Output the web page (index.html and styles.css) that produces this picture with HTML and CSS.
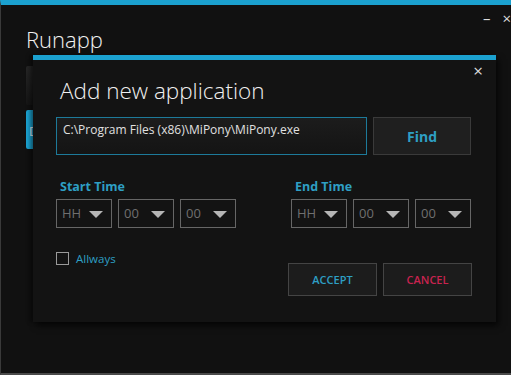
FILE: index.html
```
<!DOCTYPE html>
<html lang="en">
<head>
    <meta charset="UTF-8">
    <title>Runapp</title>
    <link rel="stylesheet" href="styles.css">
</head>
<body>
    <div class="window">
        <div class="titlebar">
            <h1 class="app-title">Runapp</h1>
            <div class="win-controls">
                <span class="win-btn">&ndash;</span>
                <span class="win-btn">&times;</span>
            </div>
        </div>

        <div class="main">
            <div class="app-list">
                <div class="app-item"></div>
                <div class="app-item app-item-active">D</div>
            </div>

            <!-- модальное окно поверх списка -->
            <div class="dialog">
                <button class="dialog-close">&times;</button>
                <h2>Add new application</h2>

                <div class="path-row">
                    <input type="text" class="path-input" value="C:\Program Files (x86)\MiPony\MiPony.exe">
                    <button class="btn btn-find">Find</button>
                </div>

                <div class="time-row">
                    <div class="time-group">
                        <label>Start Time</label>
                        <div class="time-selects">
                            <div class="select">HH<span class="arrow"></span></div>
                            <div class="select">00<span class="arrow"></span></div>
                            <div class="select">00<span class="arrow"></span></div>
                        </div>
                    </div>
                    <div class="time-group">
                        <label>End Time</label>
                        <div class="time-selects">
                            <div class="select">HH<span class="arrow"></span></div>
                            <div class="select">00<span class="arrow"></span></div>
                            <div class="select">00<span class="arrow"></span></div>
                        </div>
                    </div>
                </div>

                <div class="bottom-row">
                    <label class="checkbox"><span class="box"></span>Allways</label>
                    <div class="actions">
                        <button class="btn btn-accept">ACCEPT</button>
                        <button class="btn btn-cancel">CANCEL</button>
                    </div>
                </div>
            </div>
        </div>
    </div>
</body>
</html>
```

FILE: styles.css
```
:root {
    --accent: #1ba1cf;
    --accent-text: #2e9fc4;
    --danger: #c8234f;
    --bg: #111111;
    --dialog-bg: #131313;
    --control-bg: #1f1f1f;
    --muted: #6f6f6f;
}

* {
    margin: 0;
    padding: 0;
    box-sizing: border-box;
}

body {
    font-family: 'Open Sans', 'Noto Sans', sans-serif;
    background: var(--bg);
    color: #eeeeee;
    width: 511px;
    height: 375px;
    overflow: hidden;
}

.window {
    height: 375px;
    border-top: 5px solid var(--accent);
    border-left: 1px solid #3a3a3a;
    border-bottom: 2px solid #4a4a4a;
    background: var(--bg);
    overflow: hidden;
}

.titlebar {
    display: flex;
    justify-content: space-between;
    padding: 0 0 0 25px;
    height: 48px;
}

.app-title {
    font-weight: 300;
    font-size: 22px;
    padding-top: 19px;
    color: #f2f2f2;
}

.win-controls {
    display: flex;
    gap: 12px;
    margin-right: 0;
    padding-top: 3px;
}

.win-btn {
    font-size: 15px;
    color: #dddddd;
    line-height: 20px;
}

.main {
    position: relative;
    padding-left: 25px;
    padding-top: 13px;
}

.app-list {
    display: flex;
    flex-direction: column;
    gap: 5px;
    width: 40px;
}

.app-item {
    height: 39px;
    background: linear-gradient(#262626, #161616);
    border-radius: 2px;
}

.app-item-active {
    background: var(--accent);
    color: #e8f6ff;
    font-size: 13px;
    padding: 12px 0 0 3px;
}

.dialog {
    position: absolute;
    left: 32px;
    top: 2px;
    width: 463px;
    height: 267px;
    background: var(--dialog-bg);
    border-top: 5px solid var(--accent);
    box-shadow: 3px 4px 6px rgba(0, 0, 0, 0.6), -3px 0 4px rgba(0, 0, 0, 0.4);
    padding: 15px 24px 0 23px;
}

.dialog-close {
    position: absolute;
    right: 13px;
    top: -1px;
    background: none;
    border: none;
    color: #dddddd;
    font-size: 17px;
    font-family: inherit;
}

.dialog h2 {
    font-weight: 300;
    font-size: 22.5px;
    padding-left: 4px;
    color: #f0f0f0;
    margin-bottom: 11px;
}

.path-row {
    display: flex;
    gap: 6px;
}

.path-input {
    width: 311px;
    height: 38px;
    border: 1px solid #1d7a9a;
    background: linear-gradient(#1c1c1c, #141414);
    color: #e0e0e0;
    font-family: inherit;
    font-size: 12px;
    padding: 0 6px 14px;
    outline: none;
}

.btn {
    background: var(--control-bg);
    border: 1px solid #3a3a3a;
    font-family: inherit;
    cursor: pointer;
}

.btn-find {
    width: 98px;
    height: 38px;
    color: var(--accent-text);
    font-weight: 700;
    font-size: 14px;
    padding-top: 1px;
}

.time-row {
    display: flex;
    gap: 55px;
    margin-top: 23px;
}

.time-group label {
    display: block;
    color: var(--accent-text);
    font-weight: 700;
    font-size: 12.5px;
    padding-left: 4px;
    margin-bottom: 4px;
}

.time-selects {
    display: flex;
    gap: 6px;
}

.select {
    position: relative;
    width: 56px;
    height: 29px;
    border: 1px solid #666666;
    color: var(--muted);
    font-size: 13px;
    line-height: 27px;
    padding-left: 5px;
}

.arrow {
    position: absolute;
    right: 8px;
    top: 11px;
    border-left: 7px solid transparent;
    border-right: 7px solid transparent;
    border-top: 7px solid #b5b5b5;
}

.bottom-row {
    display: flex;
    justify-content: space-between;
    margin-top: 23px;
}

.checkbox {
    display: flex;
    align-items: center;
    gap: 7px;
    color: var(--accent-text);
    font-size: 11.5px;
    height: 14px;
}

.box {
    width: 13px;
    height: 13px;
    border: 1px solid #9a9a9a;
}

.actions {
    display: flex;
    gap: 6px;
    margin-top: 12px;
}

.btn-accept, .btn-cancel {
    width: 89px;
    height: 33px;
    font-size: 11px;
    font-weight: 600;
    border-color: #444444;
    background: #1c1c1c;
}

.btn-accept {
    color: var(--accent-text);
}

.btn-cancel {
    color: var(--danger);
}
```
